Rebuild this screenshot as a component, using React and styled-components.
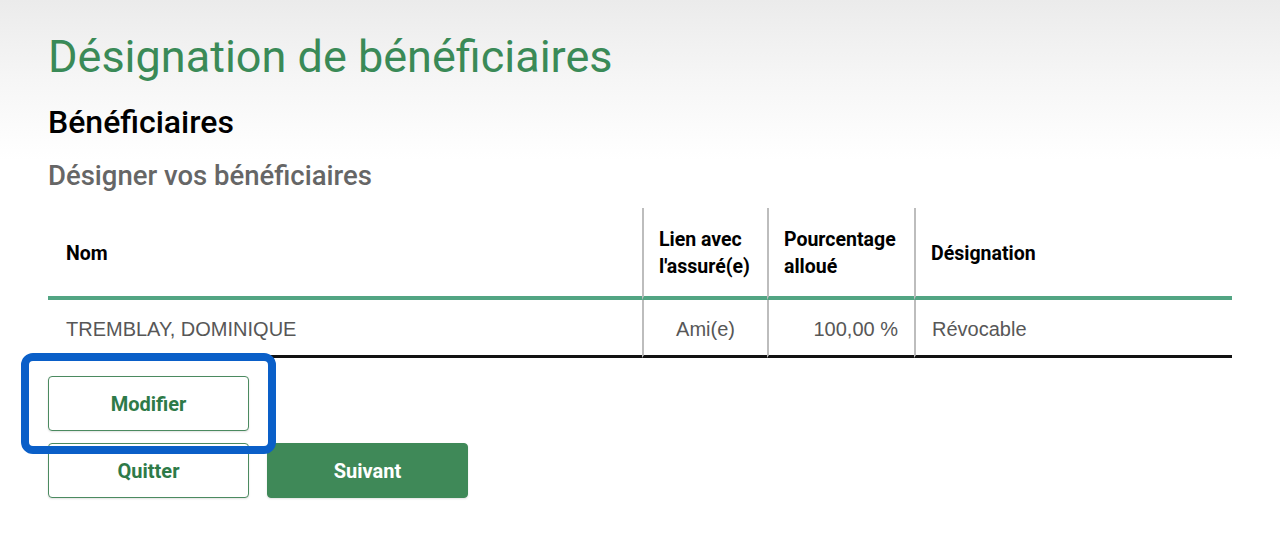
import React from "react";
import styled, { createGlobalStyle } from "styled-components";

const Global = createGlobalStyle`
  html, body { margin: 0; padding: 0; background: #fff; }
  body { font-family: Roboto, "Liberation Sans", Arial, sans-serif; }
  * { box-sizing: border-box; }
`;

const Page = styled.div`
  min-height: 548px;
  padding: 30px 48px 40px;
  background: linear-gradient(#ebebeb 0px, #f6f6f6 80px, #ffffff 160px);
`;

const Title = styled.h1`
  margin: 0;
  font-family: Roboto, sans-serif;
  font-weight: 400;
  font-size: 45px;
  line-height: 54px;
  color: #3a8a57;
`;

const SectionTitle = styled.h2`
  margin: 19px 0 0;
  font-family: Roboto, sans-serif;
  font-weight: 500;
  font-size: 32px;
  line-height: 38px;
  color: #000;
`;

const SubTitle = styled.h3`
  margin: 18px 0 0;
  font-family: Roboto, sans-serif;
  font-weight: 500;
  font-size: 27.5px;
  line-height: 33px;
  color: #666;
`;

const Table = styled.div`
  margin-top: 16px;
  display: grid;
  grid-template-columns: 594px 125px 147px 1fr;
`;

const HeadCell = styled.div`
  height: 92px;
  display: flex;
  align-items: center;
  padding: 2px 12px 0 ${(p) => (p.$first ? "18px" : "15px")};
  border-bottom: 4px solid #52a583;
  border-left: ${(p) => (p.$first ? "none" : "2px solid #bdbdbd")};
  font-family: Roboto, sans-serif;
  font-weight: 700;
  font-size: 19.5px;
  line-height: 27px;
  color: #000;
`;

const BodyCell = styled.div`
  height: 58px;
  display: flex;
  align-items: center;
  justify-content: ${(p) => p.$align || "flex-start"};
  padding: 3px 16px 0 ${(p) => (p.$first ? "18px" : "16px")};
  border-bottom: 3px solid #111;
  border-left: ${(p) => (p.$first ? "none" : "2px solid #bdbdbd")};
  font-family: "Liberation Sans", Arial, sans-serif;
  font-size: 20px;
  color: #575757;
`;

const Actions = styled.div`
  margin-top: 18px;
  display: flex;
  flex-direction: column;
  gap: 12px;
`;

const ButtonRow = styled.div`
  display: flex;
  gap: 18px;
`;

const Highlight = styled.div`
  position: relative;
  width: 201px;
`;

const HighlightFrame = styled.div`
  position: absolute;
  left: -27px;
  right: -27px;
  top: -23px;
  bottom: -23px;
  border: 8px solid #0a5fc8;
  border-radius: 12px;
  pointer-events: none;
  z-index: 2;
`;

const Button = styled.button`
  width: 201px;
  height: 55px;
  border-radius: 4px;
  font-family: Roboto, sans-serif;
  font-weight: 700;
  font-size: 20px;
  cursor: pointer;
  border: 1px solid ${(p) => (p.$primary ? "#3f8958" : "#4b8a60")};
  background: ${(p) => (p.$primary ? "#3f8958" : "#fff")};
  color: ${(p) => (p.$primary ? "#fff" : "#2e7a48")};
  box-shadow: 0 1px 2px rgba(0, 0, 0, 0.12);
`;

export default function App() {
  return (
    <>
      <Global />
      <Page>
        <Title>Désignation de bénéficiaires</Title>
        <SectionTitle>Bénéficiaires</SectionTitle>
        <SubTitle>Désigner vos bénéficiaires</SubTitle>
        <Table>
          <HeadCell $first>Nom</HeadCell>
          <HeadCell>Lien avec l'assuré(e)</HeadCell>
          <HeadCell>Pourcentage alloué</HeadCell>
          <HeadCell>Désignation</HeadCell>
          <BodyCell $first>TREMBLAY, DOMINIQUE</BodyCell>
          <BodyCell $align="center">Ami(e)</BodyCell>
          <BodyCell $align="flex-end">100,00 %</BodyCell>
          <BodyCell>Révocable</BodyCell>
        </Table>
        <Actions>
          <Highlight>
            <Button>Modifier</Button>
            <HighlightFrame />
          </Highlight>
          <ButtonRow>
            <Button>Quitter</Button>
            <Button $primary>Suivant</Button>
          </ButtonRow>
        </Actions>
      </Page>
    </>
  );
}
